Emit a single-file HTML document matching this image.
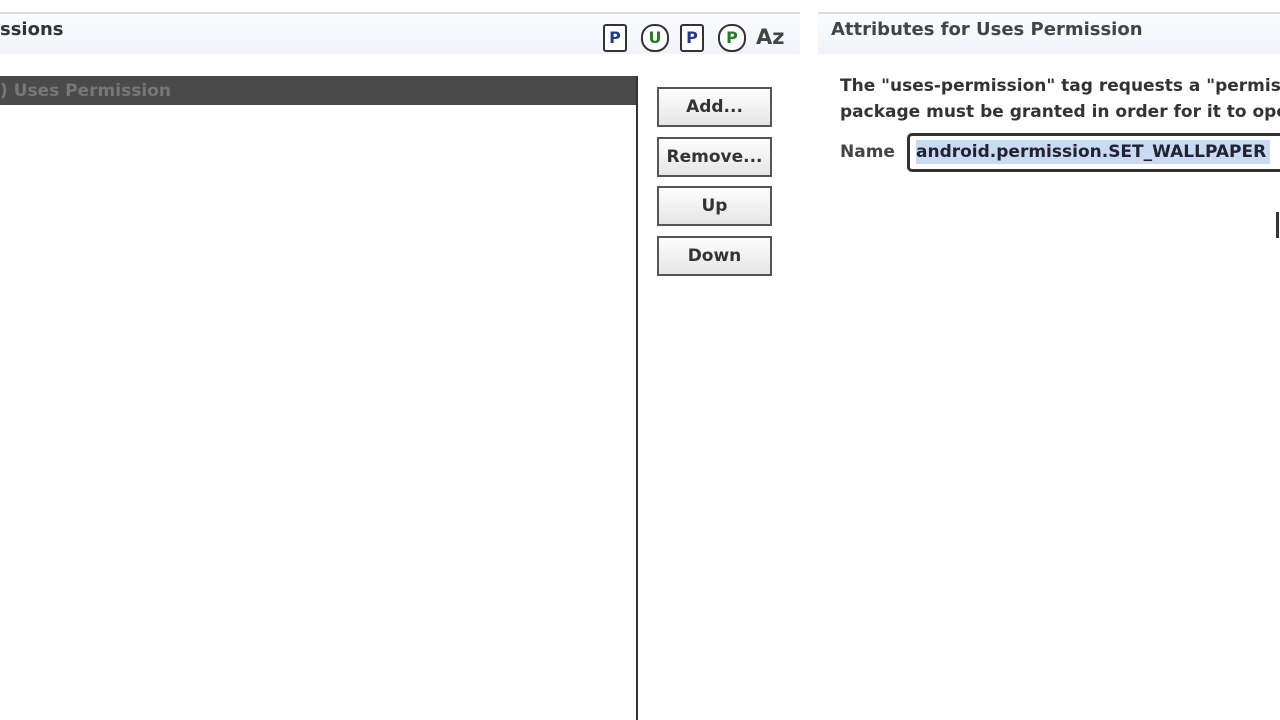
<!DOCTYPE html>
<html><head><style>
body{margin:0;width:1280px;height:720px;background:#fff;position:relative;overflow:hidden;font-family:"DejaVu Sans","Liberation Sans",sans-serif;font-weight:bold;color:#333}
.abs{position:absolute}
.hdr{top:12px;height:40px;background:linear-gradient(#fafcfe,#f0f4fa);border-top:2px solid #d8dde4}
.btn{left:657px;width:111px;height:36px;border:2px solid #555;background:linear-gradient(#fdfdfd,#e6e6e6);font-size:17px;text-align:center;line-height:36px;color:#333}
.ic{top:24px;width:20px;height:24px;border:2px solid #333;border-radius:3px;font-size:16px;text-align:center;line-height:24px;background:#fff}
</style></head><body>
<div class="abs hdr" style="left:0;width:800px"></div>
<div class="abs hdr" style="left:818px;width:462px"></div>
<div class="abs" style="left:0;top:19px;font-size:18px">ssions</div>
<div class="abs ic" style="left:603px;color:#223a8a">P</div>
<div class="abs ic" style="left:641px;width:24px;border-radius:13px;color:#2a7a2a">U</div>
<div class="abs ic" style="left:680px;color:#223a8a">P</div>
<div class="abs ic" style="left:718px;width:24px;border-radius:13px;color:#2a7a2a">P</div>
<div class="abs" style="left:756px;top:25px;font-size:21px;color:#444">Az</div>
<div class="abs" style="left:831px;top:19px;font-size:18px;color:#444">Attributes for Uses Permission</div>
<div class="abs" style="left:0;top:76px;width:638px;height:29px;background:#4a4a4a"></div>
<div class="abs" style="left:0;top:81px;font-size:17px;color:#777">) Uses Permission</div>
<div class="abs" style="left:636px;top:76px;width:2px;height:644px;background:#333"></div>
<div class="abs btn" style="top:87px">Add...</div>
<div class="abs btn" style="top:137px">Remove...</div>
<div class="abs btn" style="top:186px">Up</div>
<div class="abs btn" style="top:236px">Down</div>
<div class="abs" style="left:840px;top:73px;font-size:17px;line-height:26px;white-space:nowrap;color:#333">The "uses-permission" tag requests a "permission<br>package must be granted in order for it to operate</div>
<div class="abs" style="left:840px;top:142px;font-size:17px;color:#444">Name</div>
<div class="abs" style="left:907px;top:133px;width:380px;height:33px;border:3px solid #333;border-radius:5px;background:#fff"></div>
<div class="abs" style="left:916px;top:140px;height:24px;width:354px;background:#c9dbf3;font-size:17px;line-height:24px;color:#223">android.permission.SET_WALLPAPER</div>
<div class="abs" style="left:1276px;top:212px;width:3px;height:26px;background:#333"></div>
</body></html>
